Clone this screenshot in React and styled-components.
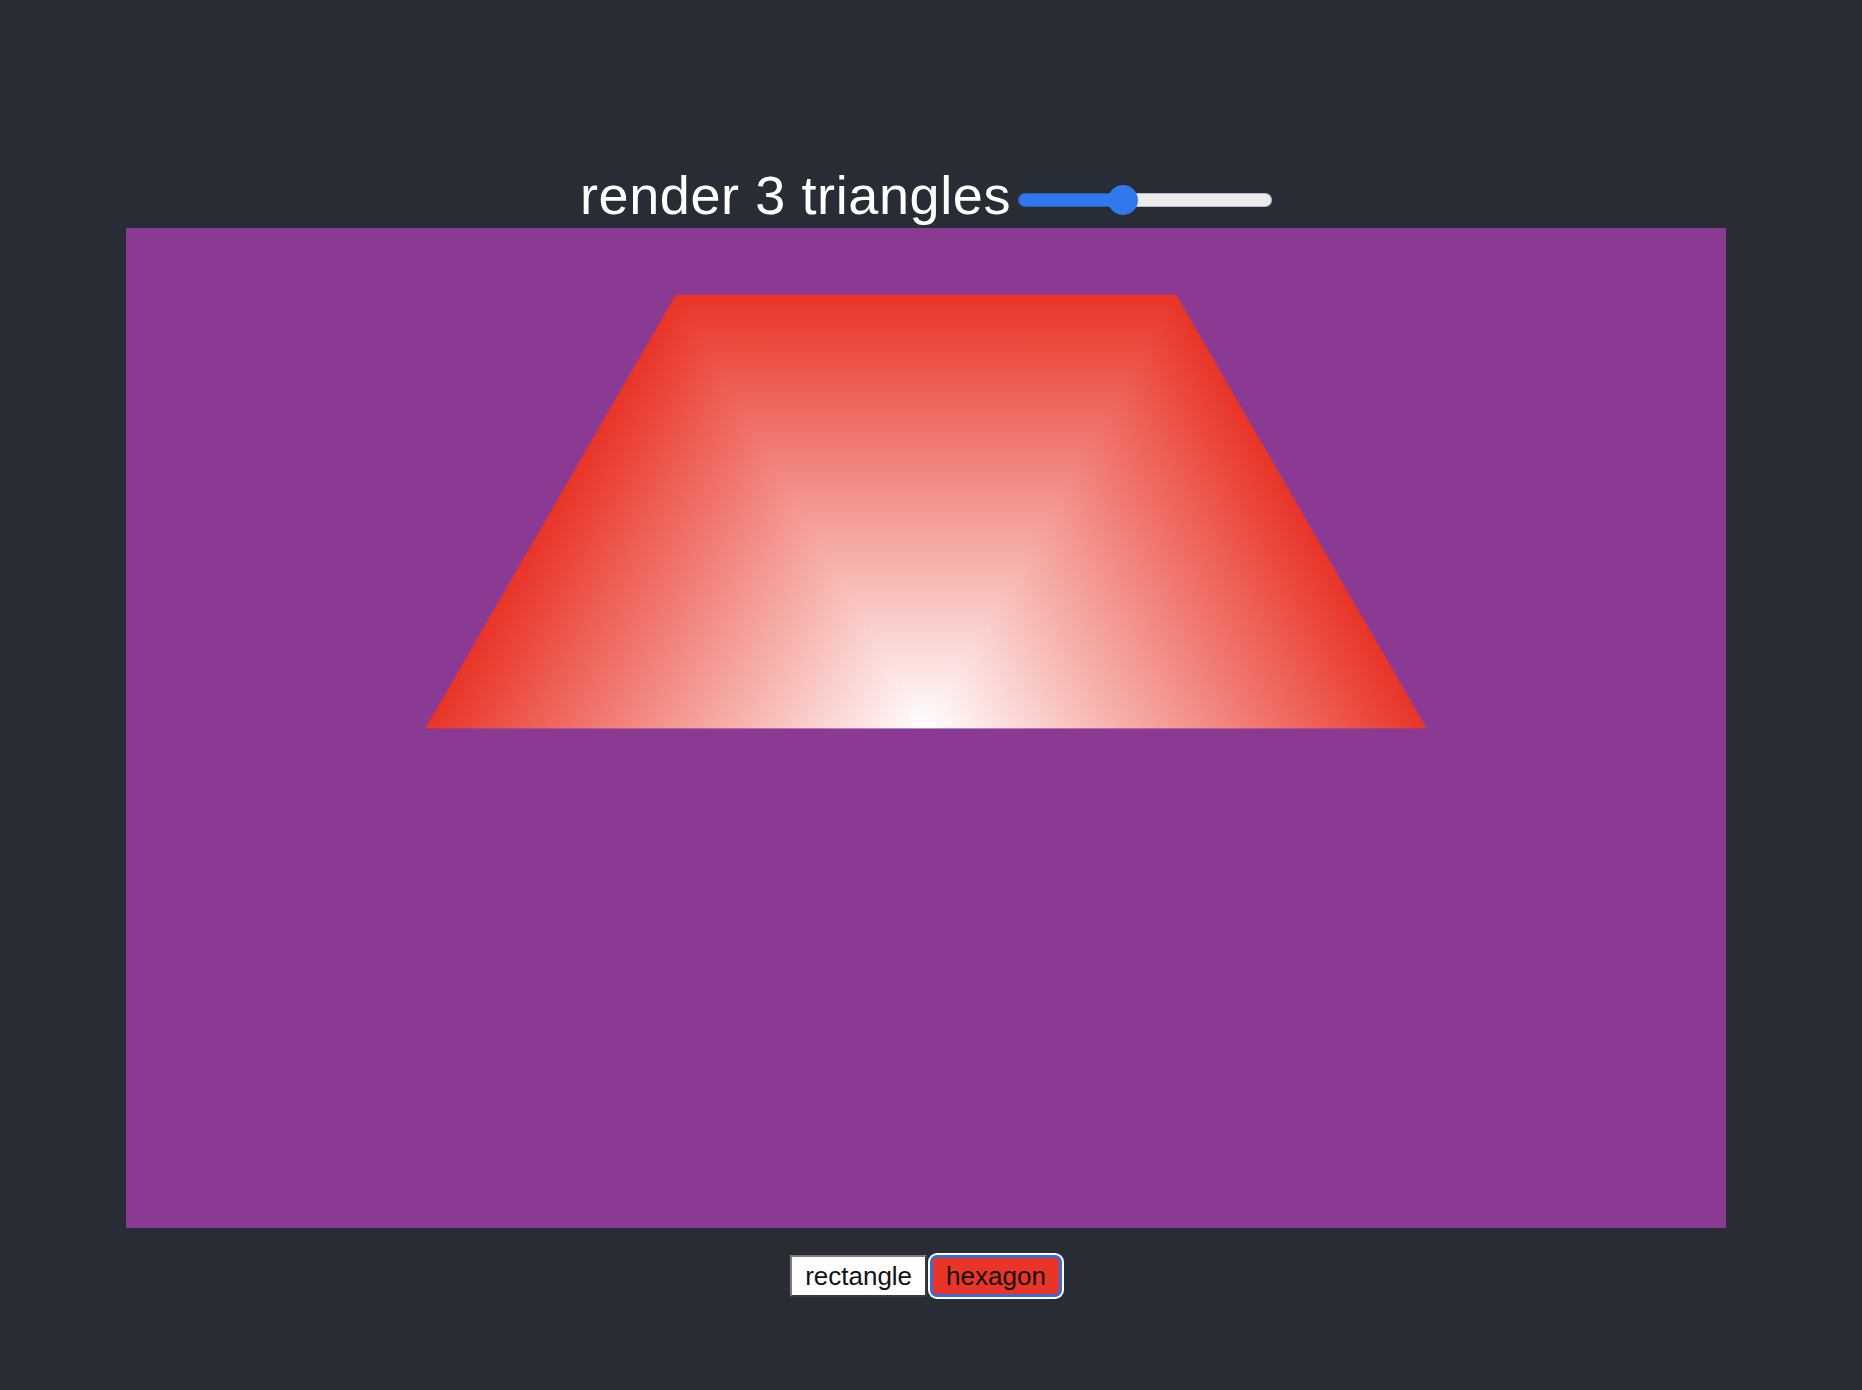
import React, { useState } from 'react';
import styled, { createGlobalStyle } from 'styled-components';

const GlobalStyle = createGlobalStyle`
  body {
    margin: 0;
    background: #282c34;
    font-family: "Liberation Sans", Arial, sans-serif;
  }
`;

const Page = styled.main`
  display: flex;
  flex-direction: column;
  align-items: center;
  padding: 168px 10px 80px 0;
`;

const Header = styled.div`
  display: flex;
  align-items: center;
  height: 60px;
`;

const Title = styled.span`
  color: #ffffff;
  font-size: 54px;
  letter-spacing: 0.6px;
  line-height: 54px;
  padding-bottom: 6px;
`;

const Range = styled.input.attrs({ type: 'range' })`
  appearance: none;
  -webkit-appearance: none;
  width: 254px;
  height: 14px;
  margin: 4px 0 0 7px;
  border-radius: 7px;
  background: linear-gradient(
    to right,
    #3478f0 0,
    #3478f0 ${(p) => p.$pct}%,
    #ececec ${(p) => p.$pct}%,
    #ececec 100%
  );
  box-shadow: inset 0 0 0 1px rgba(0, 0, 0, 0.22);
  outline: none;

  &::-webkit-slider-thumb {
    -webkit-appearance: none;
    appearance: none;
    width: 30px;
    height: 30px;
    border-radius: 50%;
    background: #3478f0;
    border: none;
  }
`;

const Stage = styled.div`
  width: 1600px;
  height: 1000px;
  background: #8b3a94;

  svg {
    display: block;
  }
`;

const Buttons = styled.div`
  display: flex;
  align-items: center;
  gap: 3px;
  margin-top: 27px;
`;

const ShapeButton = styled.button`
  font-family: "Liberation Sans", Arial, sans-serif;
  font-size: 26px;
  line-height: 30px;
  color: #111;
  cursor: pointer;
  padding: ${(p) => (p.$active ? '3px 13px' : '4px 13px')};
  background: ${(p) => (p.$active ? '#e93428' : '#ffffff')};
  border-width: ${(p) => (p.$active ? '3px' : '2px')};
  border-style: solid;
  border-color: ${(p) => (p.$active ? '#3a6bd6' : '#7b7b7b #3a3a3a #3a3a3a #7b7b7b')};
  border-radius: ${(p) => (p.$active ? '7px' : '0')};
  box-shadow: ${(p) => (p.$active ? '0 0 0 2px #ffffff' : 'none')};
`;

// hexagon centre and corners in stage pixels
const C = [800, 500];
const BL = [300, 500];
const TL = [550, 67];
const TR = [1050, 67];
const BR = [1300, 500];

const tris = [
  { id: 'gl', pts: [C, BL, TL], to: [425, 283.5] },
  { id: 'gt', pts: [C, TL, TR], to: [800, 67] },
  { id: 'gr', pts: [C, TR, BR], to: [1175, 283.5] },
];

const Hexagon = ({ count }) => (
  <svg width="1600" height="1000" viewBox="0 0 1600 1000">
    <defs>
      {tris.map((t) => (
        <linearGradient
          key={t.id}
          id={t.id}
          gradientUnits="userSpaceOnUse"
          x1={C[0]}
          y1={C[1]}
          x2={t.to[0]}
          y2={t.to[1]}
        >
          <stop offset="0" stopColor="#ffffff" />
          <stop offset="1" stopColor="#e93428" />
        </linearGradient>
      ))}
    </defs>
    {tris.slice(0, count).map((t) => (
      <polygon
        key={t.id}
        points={t.pts.map((p) => p.join(',')).join(' ')}
        fill={`url(#${t.id})`}
        stroke={`url(#${t.id})`}
        strokeWidth="0.8"
        strokeLinejoin="round"
      />
    ))}
  </svg>
);

export default function App() {
  const [count, setCount] = useState(3);
  const [shape, setShape] = useState('hexagon');
  const pct = ((15 + ((count - 1) / 5) * 224) / 254) * 100;

  return (
    <Page>
      <GlobalStyle />
      <Header>
        <Title>render {count} triangles</Title>
        <Range
          min={1}
          max={6}
          value={count}
          $pct={pct}
          onChange={(e) => setCount(Number(e.target.value))}
        />
      </Header>
      <Stage>
        <Hexagon count={count} />
      </Stage>
      <Buttons>
        <ShapeButton $active={shape === 'rectangle'} onClick={() => setShape('rectangle')}>
          rectangle
        </ShapeButton>
        <ShapeButton $active={shape === 'hexagon'} onClick={() => setShape('hexagon')}>
          hexagon
        </ShapeButton>
      </Buttons>
    </Page>
  );
}
